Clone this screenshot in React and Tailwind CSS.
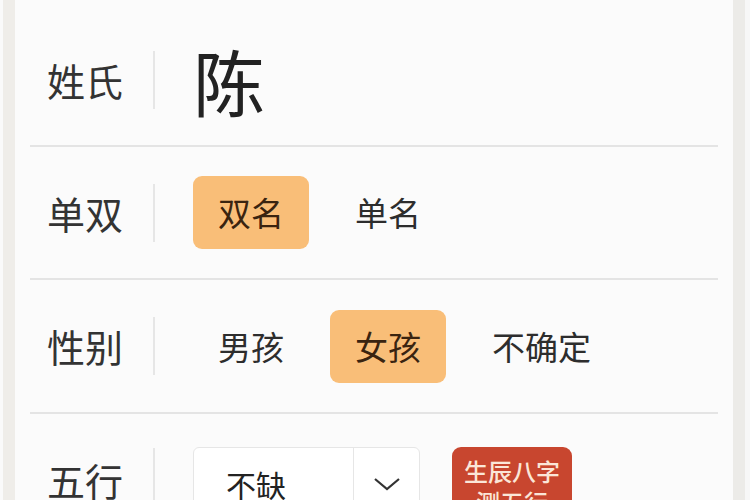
import React from "react";

const font = { fontFamily: '"Noto Sans CJK SC", "Noto Sans", sans-serif' };

function Label({ children }) {
  return (
    <div className="w-[76px] shrink-0 whitespace-nowrap text-[38px] leading-none text-[#333]" style={font}>
      {children}
    </div>
  );
}

function VDiv() {
  return <div className="ml-[30px] mr-[38px] w-[2px] h-[58px] shrink-0 bg-[#e6e6e6]" />;
}

function Opt({ children, active }) {
  return (
    <div
      className={
        "h-[73px] px-[25px] flex items-center whitespace-nowrap rounded-[9px] text-[33px] leading-none " +
        (active ? "bg-[#f9be78] text-[#3a2410]" : "text-[#2d2d2d]")
      }
    >
      {children}
    </div>
  );
}

export default function App() {
  return (
    <div className="w-[750px] h-[500px] overflow-hidden flex bg-[#fbfbfb]" style={font}>
      <div className="w-[3px] shrink-0 bg-[#fafafa]" />
      <div className="w-[12px] shrink-0 bg-[#efede9]" />
      <div className="flex-1 flex flex-col pl-[15px] pr-[15px]">
        <div className="h-[147px] shrink-0 border-b-2 border-[#e4e4e4] flex items-center pl-[17px] pt-[14px]">
          <Label>姓氏</Label>
          <VDiv />
          <div className="text-[72px] leading-none text-[#222]">陈</div>
        </div>
        <div className="h-[133px] shrink-0 border-b-2 border-[#e4e4e4] flex items-center pl-[17px]">
          <Label>单双</Label>
          <VDiv />
          <div className="flex gap-[21px]">
            <Opt active>双名</Opt>
            <Opt>单名</Opt>
          </div>
        </div>
        <div className="h-[134px] shrink-0 border-b-2 border-[#e4e4e4] flex items-center pl-[17px]">
          <Label>性别</Label>
          <VDiv />
          <div className="flex gap-[21px]">
            <Opt>男孩</Opt>
            <Opt active>女孩</Opt>
            <Opt>不确定</Opt>
          </div>
        </div>
        <div className="shrink-0 flex items-start pl-[17px] pt-[33px]">
          <div className="h-[66px] flex items-center">
            <Label>五行</Label>
          </div>
          <div className="mt-[1px]">
            <VDiv />
          </div>
          <div className="w-[227px] h-[74px] shrink-0 flex rounded-[6px] border border-[#e6e6e6] bg-white">
            <div className="w-[160px] border-r border-[#e6e6e6] flex items-center pl-[32px] text-[30px] leading-none text-[#222]">
              不缺
            </div>
            <div className="flex-1 flex items-center justify-center">
              <svg width="28" height="16" viewBox="0 0 28 16">
                <path d="M2 3 L14 13 L26 3" fill="none" stroke="#333" strokeWidth="2.2" />
              </svg>
            </div>
          </div>
          <div className="ml-[32px] w-[120px] h-[74px] shrink-0 rounded-[9px] bg-[#c8462f] flex flex-col items-center pt-[8px] text-[24px] leading-[31px] font-medium text-[#fbe6d8] whitespace-nowrap">
            <div>生辰八字</div>
            <div>测五行</div>
          </div>
        </div>
      </div>
      <div className="w-[12px] shrink-0 bg-[#ecebe8]" />
      <div className="w-[5px] shrink-0 bg-[#f7f7f7]" />
    </div>
  );
}
